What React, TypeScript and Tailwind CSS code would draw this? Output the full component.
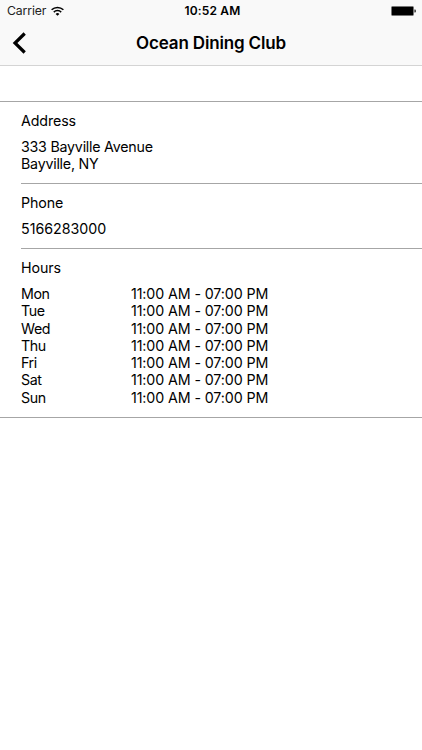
const HOURS = [
  { day: 'Mon', time: '11:00 AM - 07:00 PM' },
  { day: 'Tue', time: '11:00 AM - 07:00 PM' },
  { day: 'Wed', time: '11:00 AM - 07:00 PM' },
  { day: 'Thu', time: '11:00 AM - 07:00 PM' },
  { day: 'Fri', time: '11:00 AM - 07:00 PM' },
  { day: 'Sat', time: '11:00 AM - 07:00 PM' },
  { day: 'Sun', time: '11:00 AM - 07:00 PM' },
];

function StatusBar() {
  return (
    <div className="grid h-[22px] grid-cols-3 items-center pr-1.5 pl-[7px] text-[12.25px] leading-none">
      <div className="flex items-center gap-1">
        <span className="tracking-[-0.12px] text-[#222222]">Carrier</span>
        <svg className="mb-px ml-px" width="13" height="10" viewBox="0 0 13 10" fill="none" stroke="black" strokeWidth="1.5">
          <path d="M0.6 3.8a8.4 8.4 0 0 1 11.8 0" />
          <path d="M2.8 6.1a5.3 5.3 0 0 1 7.4 0" />
          <path d="M6.5 9.8 4.6 7.9a2.7 2.7 0 0 1 3.8 0z" fill="black" stroke="none" />
        </svg>
      </div>
      <span className="pl-0.5 text-center text-[12px] font-semibold tracking-[0.15px]">10:52 AM</span>
      <svg className="justify-self-end" width="25" height="10" viewBox="0 0 25 10">
        <rect x="0.5" y="0.5" width="22" height="9" rx="1" stroke="#777777" />
        <path d="M23.3 3.5h.7a1 1 0 0 1 1 1v1a1 1 0 0 1-1 1h-.7z" fill="#444444" />
      </svg>
    </div>
  );
}

function NavBar() {
  return (
    <div className="grid h-11 grid-cols-[60px_1fr_60px] items-center border-b border-[#d4d4d4] pb-px">
      <svg className="ml-3" width="15" height="22" viewBox="0 0 15 22" fill="none" stroke="black" strokeWidth="3.2">
        <path d="M12.7 1.5 3 11l9.7 9.5" />
      </svg>
      <h1 className="pt-0.5 text-center text-[17px] font-semibold tracking-[-0.16px]">Ocean Dining Club</h1>
    </div>
  );
}

export default function App() {
  return (
    <div className="min-h-[750px] w-full bg-white font-['Inter',sans-serif] text-[14.25px] leading-[17.3px] tracking-[-0.11px] text-black">
      <header className="bg-[#f9f9f9]">
        <StatusBar />
        <NavBar />
      </header>

      <main className="mt-[35px] border-y border-[#a6a6a6] pl-[21px]">
        {/* Address */}
        <section className="h-[82px] border-b border-[#a6a6a6] pt-2.5">
          <h2>Address</h2>
          <p className="mt-[8.5px] tracking-[-0.24px]">
            333 Bayville Avenue
            <br />
            Bayville, NY
          </p>
        </section>

        {/* Phone */}
        <section className="h-[65px] border-b border-[#a6a6a6] pt-2.5">
          <h2>Phone</h2>
          <p className="mt-[8.5px] tracking-[-0.03px]">5166283000</p>
        </section>

        {/* Hours */}
        <section className="h-[168px] pt-2.5">
          <h2>Hours</h2>
          <dl className="mt-[8.7px]">
            {HOURS.map(({ day, time }) => (
              <div key={day} className="flex">
                <dt className="w-[110px] tracking-[-0.4px]">{day}</dt>
                <dd>{time}</dd>
              </div>
            ))}
          </dl>
        </section>
      </main>
    </div>
  );
}
